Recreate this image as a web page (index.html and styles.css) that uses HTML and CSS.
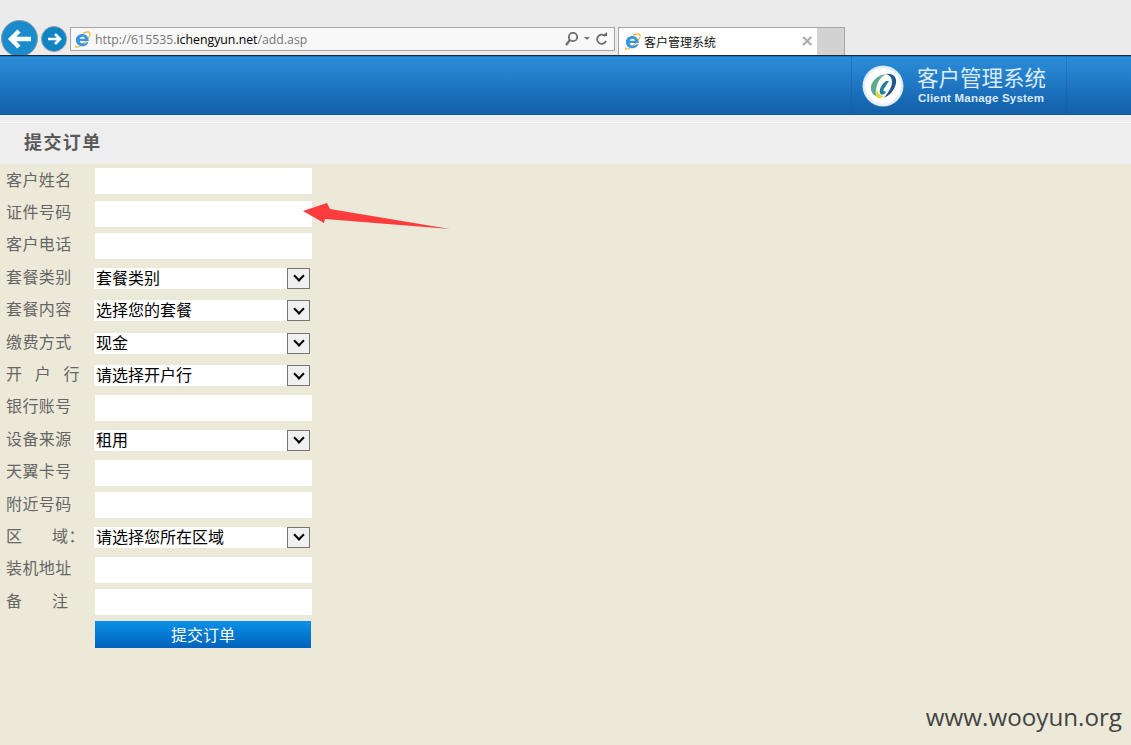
FILE: index.html
```html
<!DOCTYPE html>
<html lang="zh-CN">
<head>
    <meta charset="UTF-8">
    <title>客户管理系统</title>
    <link rel="stylesheet" href="styles.css">
</head>
<body>
    <svg class="icon-defs" width="0" height="0">
        <symbol id="ie" viewBox="0 0 18 18">
            <path d="M2 15.5C0.5 18 4 17.5 7 15.5C11.5 12.5 17.5 6 17 2.5C16.5 0 13 0.8 9.5 2.5" fill="none" stroke="#f0b429" stroke-width="1.2"/>
            <path d="M2 9.5C2 5.5 5.3 3.2 9 3.2C13 3.2 15.6 6.3 15.6 10.5H6.2C6.2 13.8 11.2 14.2 13.3 11.8H15.4C14 15.2 11 16.2 8.8 16.2C5 16.2 2 13.5 2 9.5ZM6.2 8.2H11.6C11.4 5.3 6.6 5.3 6.2 8.2Z" fill="#3a97dc"/>
        </symbol>
    </svg>

    <div class="browser-bar">
        <button class="nav-btn nav-back">
            <svg width="26" height="22" viewBox="0 0 26 22"><path d="M12 3L4 11L12 19M4 11H24" fill="none" stroke="#fff" stroke-width="4.4"/></svg>
        </button>
        <button class="nav-btn nav-forward">
            <svg width="16" height="14" viewBox="0 0 16 14"><path d="M9 2L14 7L9 12M14 7H2" fill="none" stroke="#fff" stroke-width="2.6"/></svg>
        </button>
        <div class="address-bar">
            <svg class="ie-icon" width="17" height="17"><use href="#ie"/></svg>
            <span class="address-text">http://615535.<b>ichengyun.net</b>/add.asp</span>
            <svg class="address-tools" width="46" height="16" viewBox="0 0 46 16">
                <circle cx="9" cy="6" r="4.2" fill="none" stroke="#6b6b6b" stroke-width="1.8"/>
                <path d="M6 9L2 14" stroke="#6b6b6b" stroke-width="2.2"/>
                <path d="M20 6H26L23 9Z" fill="#7a7a7a"/>
                <path d="M41 5A4.6 4.6 0 1 0 42 10" fill="none" stroke="#6b6b6b" stroke-width="1.8"/>
                <path d="M38 5H43V1Z" fill="#6b6b6b"/>
            </svg>
        </div>
        <div class="tab">
            <svg class="ie-icon" width="17" height="17"><use href="#ie"/></svg>
            <span class="tab-title">客户管理系统</span>
            <span class="tab-close">×</span>
        </div>
        <div class="tab-new"></div>
    </div>

    <header class="site-header">
        <div class="brand">
            <svg class="brand-logo" width="42" height="42" viewBox="0 0 42 42">
                <defs>
                    <radialGradient id="logoGlow">
                        <stop offset="0.8" stop-color="#fff"/>
                        <stop offset="1" stop-color="#cfe3f5"/>
                    </radialGradient>
                </defs>
                <circle cx="21" cy="21" r="20.5" fill="url(#logoGlow)"/>
                <path d="M9 25C8 17 15 10 24 9C17 13 13 20 14 31C11 30 10 28 9 25Z" fill="#5fa98c"/>
                <path d="M14 31C15 34 19 34 22 31C18 31 15 28 15 23Z" fill="#d9d936"/>
                <path d="M24 9C31 8 35 12 34 18C33 25 27 31 22 33C26 28 30 22 30 17C30 13 28 10 24 9Z" fill="#24568f"/>
                <path d="M24 16C20 19 17 24 18 28C19 31 22 30 24 27L22.5 26C21.5 27.5 21 26 22 23.5L27 16Z" fill="#1f7f9c"/>
            </svg>
            <div class="brand-text">
                <div class="brand-name">客户管理系统</div>
                <div class="brand-sub">Client Manage System</div>
            </div>
        </div>
    </header>

    <div class="page-title">提交订单</div>

    <form class="order-form">
        <label class="form-label">客户姓名</label>
        <input class="form-input" type="text">

        <label class="form-label">证件号码</label>
        <input class="form-input" type="text">

        <label class="form-label">客户电话</label>
        <input class="form-input" type="text">

        <label class="form-label">套餐类别</label>
        <div class="select-wrap">
            <select class="form-select"><option>套餐类别</option></select>
            <span class="select-arrow"></span>
        </div>

        <label class="form-label">套餐内容</label>
        <div class="select-wrap">
            <select class="form-select"><option>选择您的套餐</option></select>
            <span class="select-arrow"></span>
        </div>

        <label class="form-label">缴费方式</label>
        <div class="select-wrap">
            <select class="form-select"><option>现金</option></select>
            <span class="select-arrow"></span>
        </div>

        <label class="form-label label-spread"><span>开</span><span>户</span><span>行</span></label>
        <div class="select-wrap">
            <select class="form-select"><option>请选择开户行</option></select>
            <span class="select-arrow"></span>
        </div>

        <label class="form-label">银行账号</label>
        <input class="form-input" type="text">

        <label class="form-label">设备来源</label>
        <div class="select-wrap">
            <select class="form-select"><option>租用</option></select>
            <span class="select-arrow"></span>
        </div>

        <label class="form-label">天翼卡号</label>
        <input class="form-input" type="text">

        <label class="form-label">附近号码</label>
        <input class="form-input" type="text">

        <label class="form-label">区<span class="label-gap">域：</span></label>
        <div class="select-wrap">
            <select class="form-select"><option>请选择您所在区域</option></select>
            <span class="select-arrow"></span>
        </div>

        <label class="form-label">装机地址</label>
        <input class="form-input" type="text">

        <label class="form-label">备<span class="label-gap">注</span></label>
        <input class="form-input" type="text">

        <span></span>
        <button class="submit-btn" type="button">提交订单</button>
    </form>

    <!-- red annotation arrow on top of the form -->
    <svg class="annotation" width="150" height="30" viewBox="0 0 150 30">
        <polygon points="0,8 24,0 27,6 147,26 22,16 21,20" fill="#fd3d3d"/>
    </svg>

    <div class="watermark">www.wooyun.org</div>
</body>
</html>
```

FILE: styles.css
```css
html, body {
    height: 100%;
}

body {
    margin: 0;
    background: #ece9d8;
    font-family: "Noto Sans CJK SC", sans-serif;
    overflow: hidden;
    position: relative;
}

.icon-defs {
    position: absolute;
}

/* browser chrome */
.browser-bar {
    height: 56px;
    box-sizing: border-box;
    background: #ebebeb;
    border-bottom: 1px solid #1c2a38;
    display: flex;
    align-items: flex-end;
    overflow: hidden;
}

.nav-btn {
    padding: 0;
    border-radius: 50%;
    border: 1px solid #8a9aa6;
    background: #1b8ccb;
    display: flex;
    align-items: center;
    justify-content: center;
    flex-shrink: 0;
}

.nav-back {
    width: 37px;
    height: 37px;
    margin: 0 0 -2px 1px;
}

.nav-forward {
    width: 26px;
    height: 26px;
    margin: 0 0 3px 3px;
    background: #0f84c4;
}

.address-bar {
    width: 545px;
    height: 24px;
    box-sizing: border-box;
    margin: 0 0 4px 3px;
    background: #f8f8f8;
    border: 1px solid #a6a6a6;
    display: flex;
    align-items: center;
    padding: 0 4px 0 3px;
}

.ie-icon {
    flex-shrink: 0;
}

.address-text {
    margin-left: 4px;
    font-family: "Open Sans", sans-serif;
    font-size: 12.3px;
    color: #777;
    flex: 1;
}

.address-text b {
    font-weight: 400;
    color: #000;
}

.tab {
    width: 199px;
    height: 28px;
    box-sizing: border-box;
    margin-left: 3px;
    background: #fff;
    border: 1px solid #a6a6a6;
    border-width: 1px 0 0 1px;
    display: flex;
    align-items: center;
    padding: 0 3px 1px 5px;
}

.tab-title {
    margin-left: 3px;
    font-size: 12px;
    color: #111;
    flex: 1;
}

.tab-close {
    font-family: "DejaVu Sans", sans-serif;
    font-size: 16px;
    font-weight: 700;
    color: #a8a8a8;
    line-height: 1;
}

.tab-new {
    width: 28px;
    height: 28px;
    box-sizing: border-box;
    background: #d2d2d2;
    border: 1px solid #a6a6a6;
    border-width: 1px 1px 0 0;
}

/* site header */
.site-header {
    height: 59px;
    box-sizing: border-box;
    background: linear-gradient(#2b8cd8 0%, #2480cb 30%, #1767b1 80%, #1560a9 100%);
    border-top: 1px solid #1c74bd;
    border-bottom: 1px solid #0a5cb4;
    display: flex;
    justify-content: flex-end;
    padding-right: 64px;
}

.brand {
    width: 216px;
    box-sizing: border-box;
    display: flex;
    align-items: center;
    padding-left: 10px;
    border-left: 1px solid rgba(20, 85, 150, 0.35);
    border-right: 1px solid rgba(20, 85, 150, 0.35);
}

.brand-logo {
    flex-shrink: 0;
    margin-top: 1px;
}

.brand-text {
    margin: -3px 0 0 13px;
    color: #dbeafa;
}

.brand-name {
    font-size: 21.5px;
    line-height: 25px;
    white-space: nowrap;
}

.brand-sub {
    font-family: "Liberation Sans", sans-serif;
    font-size: 11.5px;
    font-weight: 700;
    line-height: 14px;
    letter-spacing: 0.2px;
    margin: 2px 0 0 1px;
    white-space: nowrap;
}

.page-title {
    height: 49px;
    box-sizing: border-box;
    padding: 13px 0 0 24px;
    background: linear-gradient(#eee 0 7px, #fff 7px 8px, #eee 8px);
    font-size: 18px;
    font-weight: 700;
    line-height: 26px;
    letter-spacing: 1.4px;
    color: #595959;
}

/* order form */
.order-form {
    display: grid;
    grid-template-columns: 95px 217px;
    grid-auto-rows: 32.4px;
    padding-top: 1px;
    align-items: center;
}

.form-label {
    padding-left: 6px;
    font-size: 16px;
    line-height: 20px;
    letter-spacing: 0.4px;
    color: #666;
    margin-top: -5px;
}

.label-spread {
    display: flex;
    justify-content: space-between;
    width: 80px;
    box-sizing: border-box;
}

.label-gap {
    margin-left: 29.6px;
}

.form-input {
    width: 217px;
    height: 26px;
    box-sizing: border-box;
    border: 0;
    padding: 0 4px;
    background: #fff;
}

.select-wrap {
    position: relative;
    width: 216px;
    height: 21px;
    margin-left: -1px;
    overflow: hidden;
}

/* taller than the wrap so the CJK line box is not cut at the bottom */
.form-select {
    appearance: none;
    display: block;
    width: 100%;
    height: 24px;
    margin-top: -3px;
    border: 0;
    border-radius: 0;
    padding: 0 0 0 2px;
    background: #fff;
    font-family: "Noto Sans CJK SC", sans-serif;
    font-size: 16px;
    color: #000;
}

.select-arrow {
    position: absolute;
    top: 0;
    right: 0;
    width: 23px;
    height: 21px;
    box-sizing: border-box;
    background: #f0f0f0;
    border: 1px solid #767676;
    display: flex;
    align-items: center;
    justify-content: center;
}

.select-arrow::after {
    content: "";
    width: 6px;
    height: 6px;
    margin-top: -4px;
    border: solid #000;
    border-width: 0 2px 2px 0;
    transform: rotate(45deg);
}

.submit-btn {
    width: 216px;
    height: 27px;
    border: 0;
    padding: 0 0 2px;
    background: linear-gradient(#0a90e6, #0062bc);
    color: #fff;
    font-family: "Noto Sans CJK SC", sans-serif;
    font-size: 16px;
}

/* things drawn over the page */
.annotation {
    position: absolute;
    left: 303px;
    top: 203px;
}

.watermark {
    position: absolute;
    right: 9px;
    bottom: 13px;
    font-family: "Open Sans", sans-serif;
    font-size: 24.2px;
    line-height: 30px;
    color: #444;
}
```
